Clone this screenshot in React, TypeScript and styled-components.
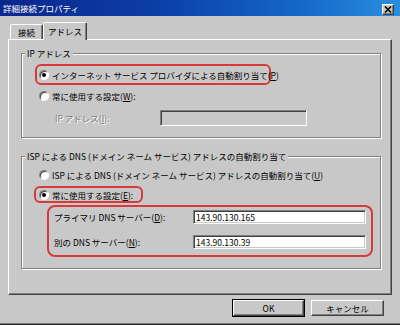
import styled, { createGlobalStyle } from "styled-components";

const Global = createGlobalStyle`
  body {
    margin: 0;
    overflow: hidden;
    background: #c8c8c8;
  }
`;

const FONT = `"Noto Sans CJK JP", "Noto Sans", sans-serif`;

const Window = styled.div`
  width: 400px;
  height: 325px;
  box-sizing: border-box;
  background: #c8c8c8;
  border-bottom: 1px solid #202020;
  box-shadow: inset 0 -1px 0 #808080;
  display: flex;
  flex-direction: column;
  font-family: ${FONT};
  font-size: 8.5px;
  color: #000;
`;

const TitleBar = styled.div`
  height: 16px;
  flex: none;
  display: flex;
  align-items: flex-start;
  justify-content: space-between;
  padding: 0 6px 0 3px;
  background: linear-gradient(90deg, #0a268c 0%, #0c3fa8 40%, #1468c8 75%, #2a8ee0 100%);
`;

const Title = styled.span`
  color: #fff;
  font-size: 8.5px;
  line-height: 16px;
`;

const CloseButton = styled.div`
  width: 12px;
  height: 11px;
  margin-top: 4px;
  box-sizing: border-box;
  background: #c8c8c8;
  border: 1px solid;
  border-color: #fff #404040 #404040 #fff;
  box-shadow: inset -1px -1px 0 #808080;
  display: flex;
  align-items: center;
  justify-content: center;
`;

const Body = styled.div`
  padding: 0 8px;
  display: flex;
  flex-direction: column;
`;

const TabStrip = styled.div`
  margin-top: 6px;
  height: 17px;
  display: flex;
  align-items: flex-end;
  padding-left: 2px;
`;

const Tab = styled.div<{ $active?: boolean }>`
  box-sizing: border-box;
  width: ${(p) => (p.$active ? 44 : 33)}px;
  height: ${(p) => (p.$active ? 18 : 15)}px;
  margin-bottom: ${(p) => (p.$active ? -1 : 0)}px;
  position: relative;
  z-index: ${(p) => (p.$active ? 1 : 0)};
  background: #c8c8c8;
  border: 1px solid;
  border-bottom: none;
  border-color: #fff #404040 transparent #fff;
  border-radius: 2px 2px 0 0;
  box-shadow: inset -1px 0 0 #808080;
  display: flex;
  align-items: center;
  justify-content: center;
  padding-bottom: ${(p) => (p.$active ? 2 : 0)}px;
`;

const Panel = styled.div`
  box-sizing: border-box;
  height: 256px;
  border: 1px solid;
  border-color: #fff #404040 #404040 #fff;
  box-shadow: inset -1px -1px 0 #808080;
  padding: 13px 0 0 12px;
  display: flex;
  flex-direction: column;
`;

const Group = styled.div<{ $gap?: number }>`
  box-sizing: border-box;
  width: 360px;
  margin-top: ${(p) => p.$gap ?? 0}px;
  border: 1px solid #808080;
  box-shadow: 1px 1px 0 #fff, inset 1px 1px 0 #fff;
  padding: 0 0 11px 0;
  display: flex;
  flex-direction: column;
  align-items: flex-start;
`;

const Legend = styled.div`
  margin: -7px 0 0 3px;
  height: 12px;
  line-height: 12px;
  padding: 0 2px;
  background: #c8c8c8;
  white-space: nowrap;
`;

const Highlight = styled.div<{ $w: number; $h: number; $top: number; $left: number; $pad: number; $radius?: number }>`
  box-sizing: border-box;
  width: ${(p) => p.$w}px;
  height: ${(p) => p.$h}px;
  margin: ${(p) => p.$top}px 0 0 ${(p) => p.$left}px;
  padding-left: ${(p) => p.$pad}px;
  border: 2px solid #d63a3a;
  border-radius: ${(p) => p.$radius ?? 6}px;
  display: flex;
  align-items: center;
  white-space: nowrap;
`;

const FieldBox = styled(Highlight)`
  flex-direction: column;
  align-items: flex-start;
  padding-top: 3px;
  gap: 11px;
`;

const OptionRow = styled.div<{ $top?: number; $left?: number }>`
  height: 14px;
  margin: ${(p) => p.$top ?? 0}px 0 0 ${(p) => p.$left ?? 0}px;
  display: flex;
  align-items: center;
  white-space: nowrap;
`;

const Radio = styled.span<{ $checked?: boolean }>`
  box-sizing: border-box;
  width: 10px;
  height: 10px;
  flex: none;
  margin-right: 3px;
  border-radius: 50%;
  background: #fff;
  border: 1px solid;
  border-color: #808080 #fff #fff #808080;
  box-shadow: inset 1px 1px 0 #404040;
  display: flex;
  align-items: center;
  justify-content: center;
  &::after {
    content: "";
    width: 4px;
    height: 4px;
    border-radius: 50%;
    background: ${(p) => (p.$checked ? "#000" : "transparent")};
  }
`;

const FieldRow = styled.div<{ $top?: number; $left?: number; $h: number }>`
  height: ${(p) => p.$h}px;
  margin: ${(p) => p.$top ?? 0}px 0 0 ${(p) => p.$left ?? 0}px;
  display: flex;
  align-items: center;
  white-space: nowrap;
`;

const FieldLabel = styled.span<{ $w: number; $disabled?: boolean }>`
  width: ${(p) => p.$w}px;
  flex: none;
  color: ${(p) => (p.$disabled ? "#808080" : "#000")};
  text-shadow: ${(p) => (p.$disabled ? "1px 1px 0 #fff" : "none")};
`;

const Input = styled.div<{ $w: number; $h: number; $disabled?: boolean }>`
  box-sizing: border-box;
  width: ${(p) => p.$w}px;
  height: ${(p) => p.$h}px;
  background: ${(p) => (p.$disabled ? "#c8c8c8" : "#fff")};
  border: 1px solid;
  border-color: #808080 #fff #fff #808080;
  box-shadow: inset 1px 1px 0 #404040, inset -1px -1px 0 #c8c8c8;
  padding-left: 2px;
  display: flex;
  align-items: center;
  font-size: 8.5px;
`;

const ButtonRow = styled.div`
  margin-top: 5px;
  padding-right: 8px;
  display: flex;
  justify-content: flex-end;
  gap: 7px;
`;

const Button = styled.div<{ $default?: boolean; $w: number }>`
  box-sizing: border-box;
  width: ${(p) => p.$w}px;
  height: 16px;
  border: 1px solid;
  border-color: #fff #404040 #404040 #fff;
  box-shadow: inset -1px -1px 0 #808080;
  outline: ${(p) => (p.$default ? "1px solid #000" : "none")};
  display: flex;
  align-items: center;
  justify-content: center;
`;

export default function App() {
  return (
    <Window>
      <Global />
      <TitleBar>
        <Title>詳細接続プロパティ</Title>
        <CloseButton>
          <svg width="8" height="7" viewBox="0 0 8 7">
            <path d="M1 0.5 L7 6.5 M7 0.5 L1 6.5" stroke="#000" strokeWidth="1.6" />
          </svg>
        </CloseButton>
      </TitleBar>
      <Body>
        <TabStrip>
          <Tab>接続</Tab>
          <Tab $active>アドレス</Tab>
        </TabStrip>
        <Panel>
          <Group>
            <Legend>IP アドレス</Legend>
            <Highlight $w={236} $h={21} $top={5} $left={13} $pad={2}>
              <Radio $checked />
              インターネット サービス プロバイダによる自動割り当て(<u>P</u>)
            </Highlight>
            <OptionRow $top={4} $left={17}>
              <Radio />
              常に使用する設定(<u>W</u>):
            </OptionRow>
            <FieldRow $h={16} $top={7} $left={33}>
              <FieldLabel $w={105} $disabled>
                IP アドレス(<u>I</u>):
              </FieldLabel>
              <Input $w={147} $h={16} $disabled />
            </FieldRow>
          </Group>
          <Group $gap={18}>
            <Legend>ISP による DNS (ドメイン ネーム サービス) アドレスの自動割り当て</Legend>
            <OptionRow $top={6} $left={17}>
              <Radio />
              ISP による DNS (ドメイン ネーム サービス) アドレスの自動割り当て(<u>U</u>)
            </OptionRow>
            <Highlight $w={109} $h={17} $top={4} $left={12} $pad={3}>
              <Radio $checked />
              常に使用する設定(<u>E</u>):
            </Highlight>
            <FieldBox $w={326} $h={52} $top={2} $left={25} $pad={5} $radius={8}>
              <FieldRow $h={14}>
                <FieldLabel $w={139}>
                  プライマリ DNS サーバー(<u>D</u>):
                </FieldLabel>
                <Input $w={173} $h={14}>143.90.130.165</Input>
              </FieldRow>
              <FieldRow $h={14}>
                <FieldLabel $w={139}>
                  別の DNS サーバー(<u>N</u>):
                </FieldLabel>
                <Input $w={173} $h={14}>143.90.130.39</Input>
              </FieldRow>
            </FieldBox>
          </Group>
        </Panel>
        <ButtonRow>
          <Button $default $w={71}>OK</Button>
          <Button $w={73}>キャンセル</Button>
        </ButtonRow>
      </Body>
    </Window>
  );
}
